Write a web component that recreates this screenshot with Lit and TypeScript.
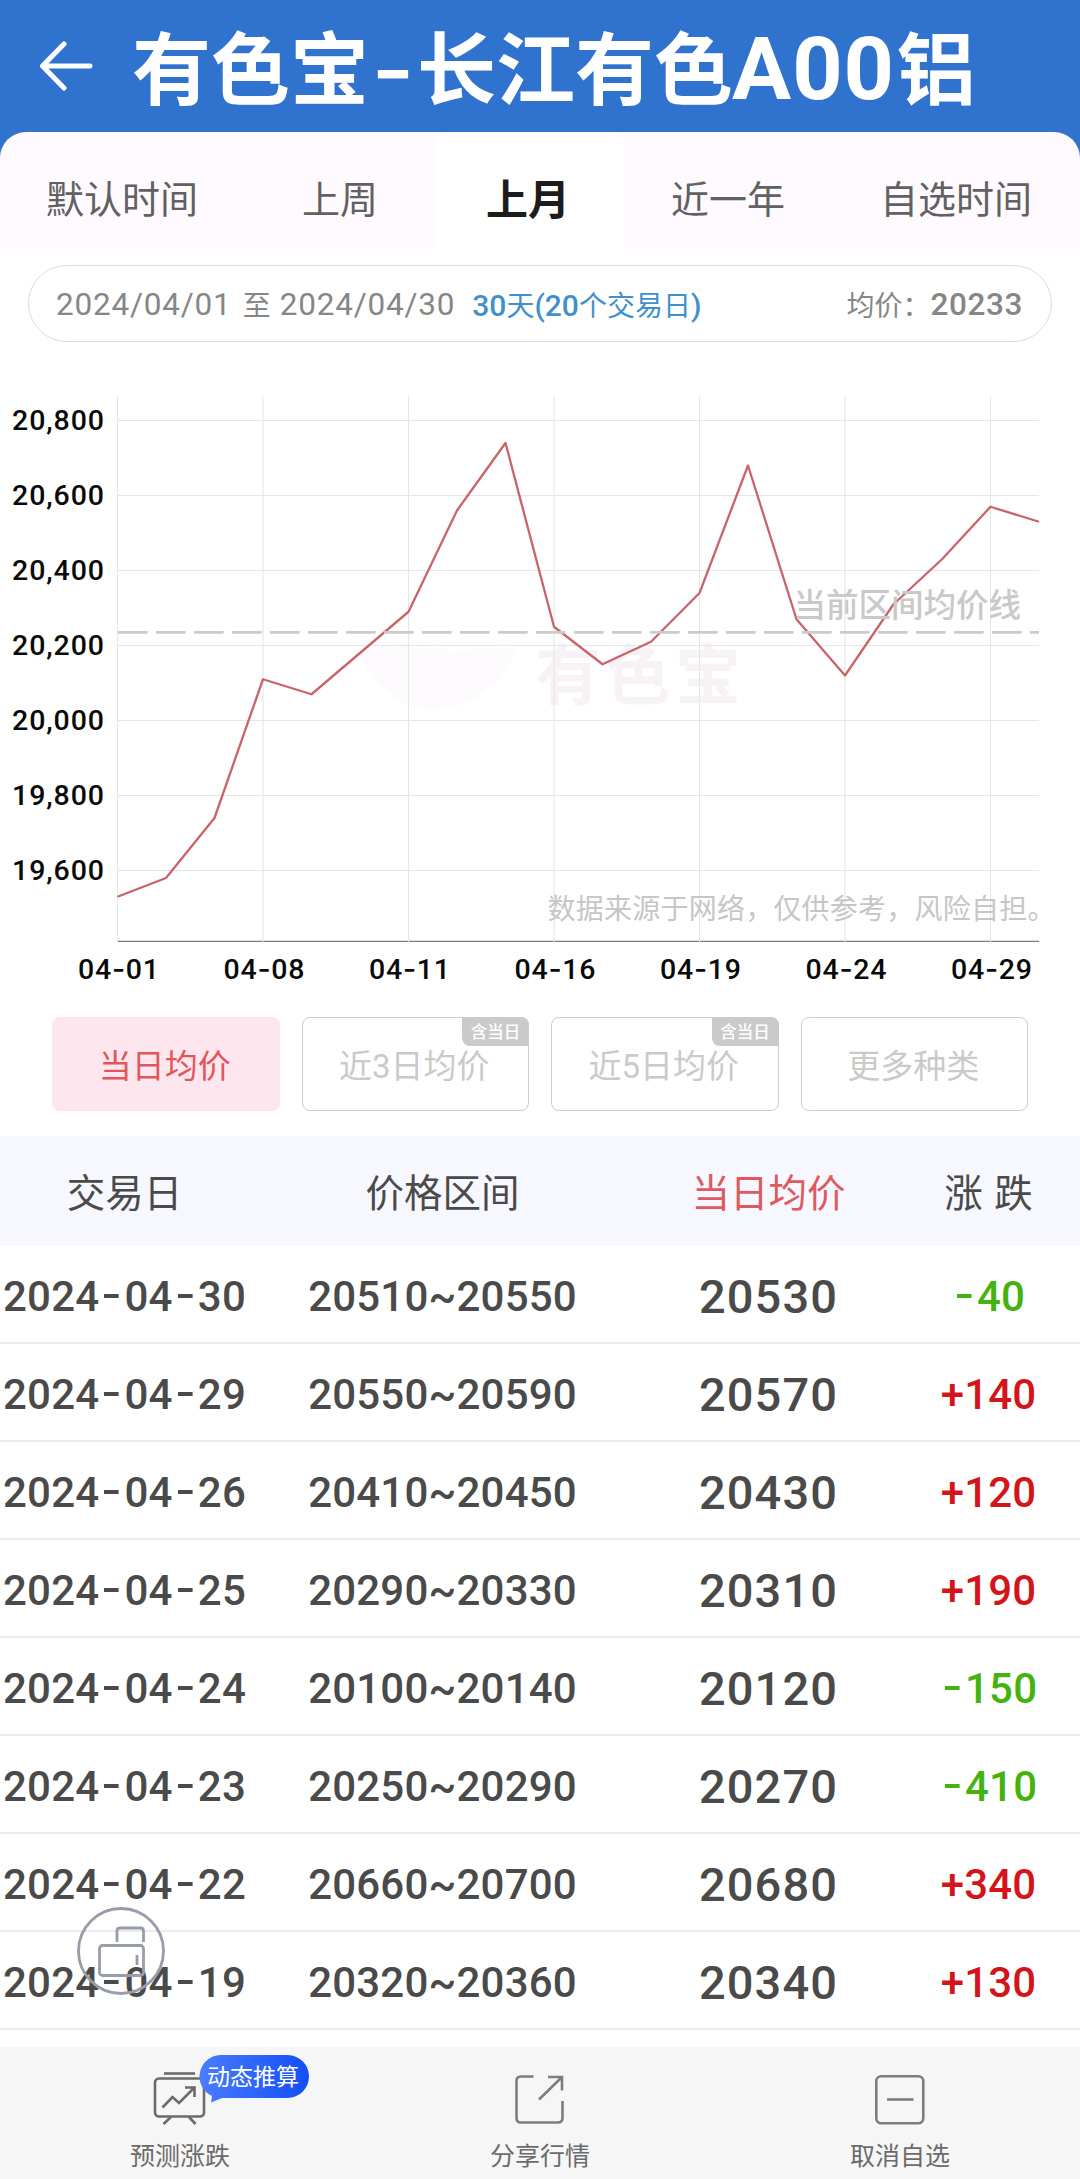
import { LitElement, html, css, svg, nothing } from "lit";
import { customElement } from "lit/decorators.js";
import { classMap } from "lit/directives/class-map.js";

const TABS = ["默认时间", "上周", "上月", "近一年", "自选时间"];

const POINTS = [
  19530, 19580, 19740, 20110, 20070, 20180, 20290, 20560, 20740, 20250,
  20150, 20210, 20340, 20680, 20270, 20120, 20310, 20430, 20570, 20530,
];
const X_LABELS = ["04-01", "04-08", "04-11", "04-16", "04-19", "04-24", "04-29"];
const Y_LABELS = [20800, 20600, 20400, 20200, 20000, 19800, 19600];
const AVERAGE = 20233;

const KINDS = [
  { name: "当日均价", badge: "", active: true },
  { name: "近3日均价", badge: "含当日", active: false },
  { name: "近5日均价", badge: "含当日", active: false },
  { name: "更多种类", badge: "", active: false },
];

const ROWS: [string, string, string, string][] = [
  ["2024-04-30", "20510~20550", "20530", "-40"],
  ["2024-04-29", "20550~20590", "20570", "+140"],
  ["2024-04-26", "20410~20450", "20430", "+120"],
  ["2024-04-25", "20290~20330", "20310", "+190"],
  ["2024-04-24", "20100~20140", "20120", "-150"],
  ["2024-04-23", "20250~20290", "20270", "-410"],
  ["2024-04-22", "20660~20700", "20680", "+340"],
  ["2024-04-19", "20320~20360", "20340", "+130"],
];

/** Renders a string with its hyphens widened to the width of a digit. */
const wide = (s: string) =>
  s.split(/(-)/).map((p) => (p === "-" ? html`<span class="hy">-</span>` : p));

@customElement("price-chart")
class PriceChart extends LitElement {
  static styles = css`
    :host { display: block; height: 656px; flex: none; margin-top: 4px; }
    svg { display: block; width: 1080px; height: 656px; }
    .axis { font: 500 28.5px Roboto, sans-serif; fill: #0a0a0a; }
    .axis-dash { font-family: Inter, sans-serif; }
    .grid { stroke: #e6e6e6; stroke-width: 1.1; }
    .base { stroke: #7d7a80; stroke-width: 1.3; }
    .avg { stroke: #cbcbcb; stroke-width: 2.6; stroke-dasharray: 29.6 8.4; }
    .line { fill: none; stroke: #c8646a; stroke-width: 2.3; stroke-linejoin: round; }
    .note { font: 400 28px "Noto Sans CJK SC", sans-serif; fill: #c6c6c6; }
    .avg-label { font: 500 32.5px "Noto Sans CJK SC", sans-serif; fill: #c9c9c9; }
    .mark { font: 700 66px "Noto Sans CJK SC", sans-serif; fill: #f6f2f6; letter-spacing: 4px; }
    .mark-logo { fill: #fefbff; }
  `;

  render() {
    const x = (i: number) => 117.5 + i * 48.5;
    const y = (v: number) => 74.5 + (20800 - v) * 0.375;
    return html`<svg viewBox="0 0 1080 656">
      <path class="mark-logo" d="M357 305 Q385 287 410 301 L424 299 L452 305 L517 300 Q510 328 488 343 Q466 362 436 364 Q384 364 357 305Z"></path>
      <text class="mark" x="535" y="353">有色宝</text>
      ${Y_LABELS.map((v) => svg`<line class="grid" x1="117" x2="1039" y1=${y(v)} y2=${y(v)}></line>
        <text class="axis" x="12" y=${y(v) + 9.8} textLength="92">${v.toLocaleString("en-US")}</text>`)}
      <line class="base" x1="117.5" x2="1039" y1="595.3" y2="595.3"></line>
      ${X_LABELS.map((t, k) => svg`<line class="grid" x1=${x(k * 3)} x2=${x(k * 3)} y1="50" y2="596"></line>
        <text class="axis" x=${x(k * 3) - 39.5} y="633" textLength="81">${t.slice(0, 2)}<tspan class="axis-dash">-</tspan>${t.slice(3)}</text>`)}
      <polyline class="line" points=${POINTS.map((v, i) => `${x(i)},${y(v)}`).join(" ")}></polyline>
      <line class="avg" x1="118" x2="1039" y1=${y(AVERAGE) - 0.8} y2=${y(AVERAGE) - 0.8}></line>
      <text class="avg-label" x="793.5" y="271">当前区间均价线</text>
      <text class="note" x="547.5" y="573" textLength="508">数据来源于网络，仅供参考，风险自担。</text>
    </svg>`;
  }
}

@customElement("app-root")
class AppRoot extends LitElement {
  static styles = css`
    :host {
      display: flex; flex-direction: column; position: relative;
      width: 1080px; height: 2179px; overflow: hidden; background: #fff;
      font-family: Roboto, "Noto Sans CJK SC", sans-serif; color: #4a4a4a;
    }
    * { box-sizing: border-box; }
    .head { background: #3073ce; flex: none; }
    .title-bar { height: 132px; display: flex; align-items: center; padding-left: 39px; color: #fff; }
    .back { width: 54px; height: 50px; flex: none; }
    .title { font: 700 79px/100px "Noto Sans CJK SC", sans-serif; margin-left: 39px; white-space: nowrap; margin-top: -2px; }
    .dash { display: inline-block; width: 48px; text-align: center; transform: translateY(-2px) scaleX(1.4); }
    .latin { font-family: Roboto, sans-serif; font-weight: 700; font-size: 88px; letter-spacing: 1px; margin: 0 2px 0 -1px; line-height: 1; }
    .tabs {
      display: grid; grid-template-columns: 244px 192px 188px 208px 248px; height: 116px;
      background: #fefaff; overflow: hidden; border-radius: 26px 26px 0 0;
    }
    .tab { display: flex; align-items: center; justify-content: center; padding-top: 13px; font: 400 38px/56px "Noto Sans CJK SC", sans-serif; color: #616161; }
    .tab.on { background: #fff; border-radius: 12px 12px 0 0; font-size: 42px; font-weight: 700; color: #1c1c1c; padding-right: 4px; }
    .range {
      margin: 17px 28px 0; height: 77px; border: 1px solid #dcdcdc; border-radius: 39px; flex: none;
      display: flex; align-items: center; padding: 1px 28px 0 27px;
      font-size: 31.5px; letter-spacing: .8px; color: #868686; white-space: pre;
    }
    .range .cjk { font: 400 28px/40px "Noto Sans CJK SC", sans-serif; letter-spacing: 0; }
    .range .to { margin: 0 9px 0 11px; }
    .days { margin-left: 17px; color: #418fcb; font-weight: 500; font-size: 30px; letter-spacing: 0; }
    .mean { margin-left: auto; }
    .num { font-weight: 500; letter-spacing: .6px; }
    .kinds { display: grid; grid-template-columns: repeat(4, 1fr); gap: 22px; padding: 0 52px; margin-top: 15px; height: 94px; flex: none; }
    .kind {
      position: relative; border: 1px solid #cdcdcd; border-radius: 8px;
      display: flex; align-items: center; justify-content: center; padding: 5px 2px 0 0;
      font: 400 33px/40px Roboto, "Noto Sans CJK SC", sans-serif; color: #cacaca;
    }
    .kind.on { background: #fde6ee; border-color: #fde6ee; color: #e0565b; }
    .badge {
      position: absolute; right: -1px; top: -1px; width: 67px; height: 29px; border-radius: 0 8px 0 8px;
      background: #cacaca; color: #fff; font: 500 16.5px/29px "Noto Sans CJK SC", sans-serif; text-align: center;
    }
    .row { display: grid; grid-template-columns: 249px 387px 265px 175px; height: 98px; align-items: center; text-align: center; border-bottom: 2px solid #ebebeb; white-space: nowrap; font-size: 42px; font-weight: 500; letter-spacing: .2px; flex: none; }
    .row.header { height: 110px; margin-top: 25px; border: 0; background: #f6f7ff; font: 400 38.5px/56px "Noto Sans CJK SC", sans-serif; letter-spacing: 0; word-spacing: 3px; padding-bottom: 2px; }
    .red { color: #df5a5f; }
    .cell { display: flex; justify-content: center; padding-top: 4px; white-space: pre; }
    .big { font-size: 47px; letter-spacing: 1.1px; }
    .up { color: #d3151b; }
    .down { color: #44b310; }
    .hy { display: inline-block; width: .6em; text-align: center; transform: translateY(-.05em) scaleX(1.35); }
    .fab { position: absolute; left: 76px; top: 1906px; width: 90px; height: 90px; }
    .bottom { margin-top: auto; height: 132px; background: #f6f6f6; display: grid; grid-template-columns: repeat(3, 1fr); flex: none; }
    .item { position: relative; display: flex; flex-direction: column; align-items: center; padding-top: 24px; font: 400 25px/36px "Noto Sans CJK SC", sans-serif; color: #6b6b6b; }
    .item svg.icon { width: 54px; height: 56px; margin-bottom: 9px; }
    .bubble { position: absolute; left: 199px; top: 8px; width: 110px; height: 48px; }
    .bubble svg { position: absolute; inset: 0; width: 110px; height: 48px; }
    .bubble span { position: relative; display: block; font-size: 23px; line-height: 41px; text-align: center; color: #fff; padding-right: 2px; }
  `;

  private icons = [
    svg`<g fill="none" stroke="#6b6b6b" stroke-width="2.6"><path d="M11 2.5H42"></path><rect x="2" y="7.5" width="49" height="38" rx="4"></rect><path d="M9.5 36.500L19.500 26L26 32L41 17M32 16.500H41.500V26"></path><path d="M18 46L10.500 53M36 46L42.500 53"></path></g>`,
    svg`<g fill="none" stroke="#7d7d7d" stroke-width="2.6"><path d="M20.500 5.500H8Q3.500 5.500 3.500 10V47Q3.500 51.500 8 51.500H44.500Q49.500 51.500 49.500 47V30"></path><path d="M26 28.500L48.500 6.500M35 6H49V19.500"></path></g>`,
    svg`<g fill="none" stroke="#7d7d7d" stroke-width="2.6"><rect x="3.300" y="5.300" width="47" height="47" rx="5"></rect><path d="M14 28.500H40.500"></path></g>`,
  ];

  render() {
    return html`
      <div class="head">
        <div class="title-bar">
          <svg class="back" viewBox="0 0 54 50"><path d="M25 3L3.500 25L25 47M3.500 25H51" fill="none" stroke="#fff" stroke-width="5" stroke-linecap="round" stroke-linejoin="round"></path></svg>
          <div class="title">有色宝<span class="dash">-</span>长江有色<span class="latin">A00</span>铝</div>
        </div>
        <div class="tabs">
          ${TABS.map((t) => html`<div class=${classMap({ tab: true, on: t === "上月" })}>${t}</div>`)}
        </div>
      </div>
      <div class="range"><span>2024/04/01</span><span class="cjk to">至</span><span>2024/04/30</span><span class="days">30<span class="cjk">天</span>(20<span class="cjk">个交易日</span>)</span><span class="mean cjk">均价：</span><span class="num">${AVERAGE}</span></div>
      <price-chart></price-chart>
      <div class="kinds">
        ${KINDS.map((k) => html`<div class=${classMap({ kind: true, on: k.active })}>${k.name}${k.badge ? html`<span class="badge">${k.badge}</span>` : nothing}</div>`)}
      </div>
      <div class="row header"><div>交易日</div><div>价格区间</div><div class="red">当日均价</div><div>涨 跌</div></div>
      ${ROWS.map(([d, r, a, c]) => html`<div class="row">
        <div class="cell"><span>${wide(d)}</span></div><div class="cell">${r}</div><div class="cell big">${a}</div>
        <div class=${classMap({ cell: true, up: c[0] === "+", down: c[0] === "-" })}><span>${wide(c)}</span></div>
      </div>`)}
      <svg class="fab" viewBox="0 0 90 90" fill="none" stroke="#989daa" stroke-width="2.8">
        <circle cx="45" cy="45" r="42.500"></circle>
        <rect x="23.500" y="39.500" width="44" height="30" rx="3"></rect>
        <path d="M41 36V25Q41 22 44 22H64.500Q67.500 22 67.500 25V36M61 49V59"></path>
      </svg>
      <div class="bottom">
        ${["预测涨跌", "分享行情", "取消自选"].map((t, i) => html`<div class="item">
          <svg class="icon" viewBox="0 0 54 56">${this.icons[i]}</svg>${t}
          ${i === 0 ? html`<div class="bubble"><svg viewBox="0 0 110 48"><defs><linearGradient id="g"><stop offset="0" stop-color="#4a7cff"></stop><stop offset="1" stop-color="#134ff7"></stop></linearGradient></defs><path fill="url(#g)" d="M21.500 0H88.500A21.500 21.500 0 0 1 88.500 43H23L12 47.500L13 41A21.500 21.500 0 0 1 21.500 0Z"></path></svg><span>动态推算</span></div>` : nothing}
        </div>`)}
      </div>
    `;
  }
}
